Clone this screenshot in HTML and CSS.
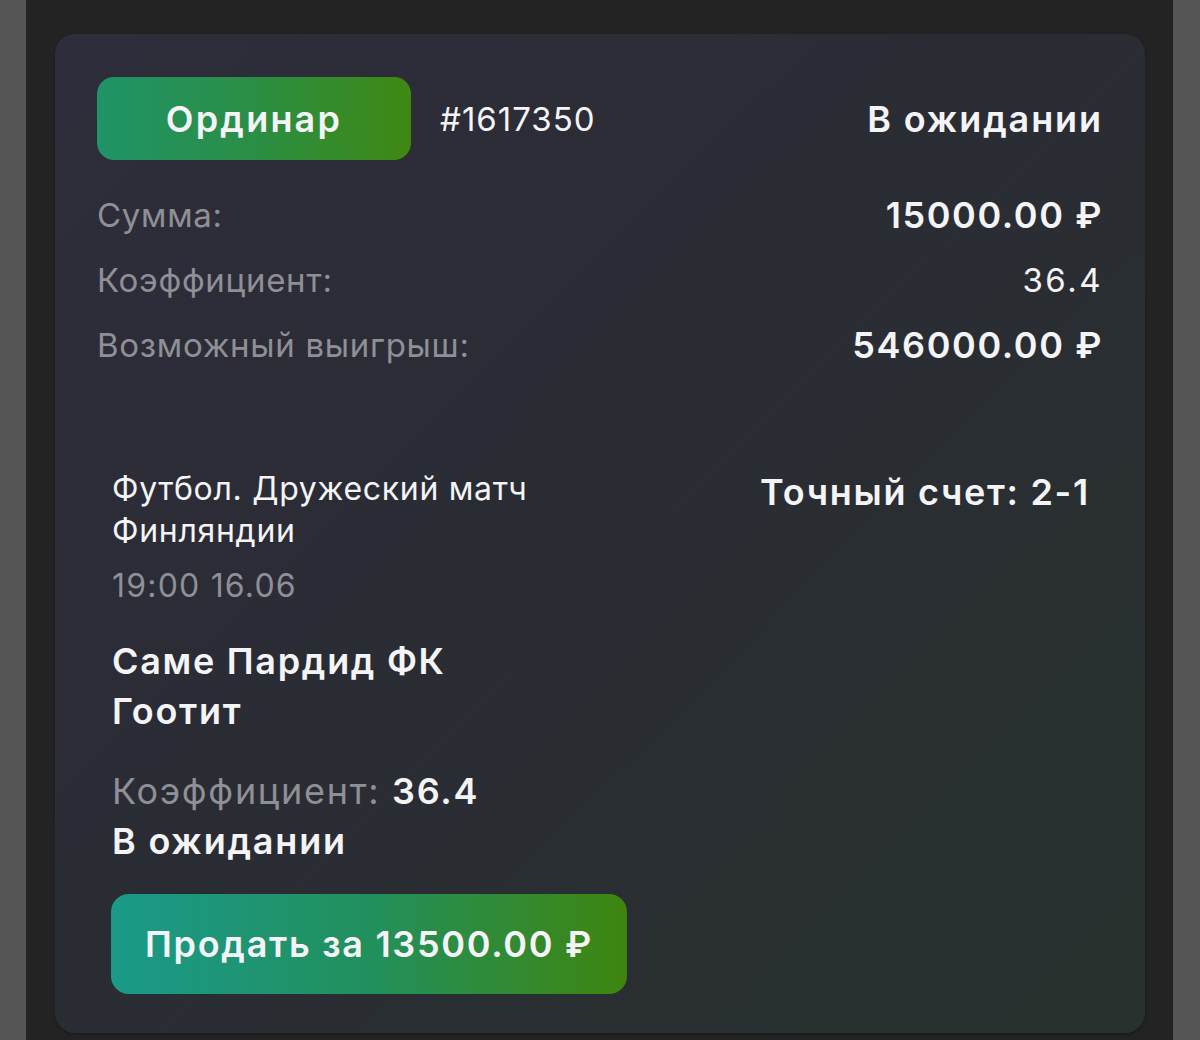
FILE: index.html
```html
<!DOCTYPE html>
<html lang="ru">

<head>
    <meta charset="UTF-8">
    <meta name="viewport" content="width=device-width, initial-scale=1.0">
    <link rel="stylesheet" href="styles.css">
</head>

<body>
    <div class="screen">
        <div class="bet-card">
            <div class="bet-header">
                <div class="bet-type">Ординар</div>
                <div class="bet-id">#1617350</div>
                <div class="bet-status">В ожидании</div>
            </div>

            <div class="bet-rows">
                <div class="bet-row">
                    <span class="label">Сумма:</span>
                    <span class="value strong">15000.00 ₽</span>
                </div>
                <div class="bet-row">
                    <span class="label">Коэффициент:</span>
                    <span class="value">36.4</span>
                </div>
                <div class="bet-row">
                    <span class="label">Возможный выигрыш:</span>
                    <span class="value strong">546000.00 ₽</span>
                </div>
            </div>

            <div class="event">
                <div class="event-main">
                    <div class="event-league">Футбол. Дружеский матч Финляндии</div>
                    <div class="event-date">19:00 16.06</div>
                    <div class="event-teams">Саме Пардид ФК Гоотит</div>
                    <div class="event-coef"><span class="label">Коэффициент:</span> <b>36.4</b></div>
                    <div class="event-status">В ожидании</div>
                </div>
                <div class="event-outcome">Точный счет: 2-1</div>
            </div>

            <button type="button" class="btn-sell">Продать за 13500.00 ₽</button>
        </div>
    </div>
</body>

</html>
```

FILE: styles.css
```css
/* page frame */
body {
    margin: 0;
    background: #565656;
    font-family: Inter, "Noto Sans", sans-serif;
    color: #f4f4f6;
}

.screen {
    margin: 0 27px 0 26px;
    height: 1040px;
    background: #232323;
    padding: 34px 28px 0 29px;
    box-sizing: border-box;
}

.bet-card {
    height: 999px;
    box-sizing: border-box;
    padding: 43px 44px 38px 42px;
    border-radius: 20px;
    background: linear-gradient(135deg, #2e2d3b 0%, #2a2c34 45%, #292f31 75%, #28312e 100%);
    box-shadow: 0 1px 3px rgba(0, 0, 0, 0.4);
}

/* header */
.bet-header {
    display: flex;
    align-items: center;
    height: 83px;
}

.bet-type {
    width: 314px;
    height: 83px;
    border-radius: 17px;
    background: linear-gradient(90deg, #1f9467 0%, #2b8e45 50%, #3f8812 100%);
    display: flex;
    align-items: center;
    justify-content: center;
    font-size: 36px;
    font-weight: 600;
    letter-spacing: 2.2px;
}

.bet-id {
    margin-left: 29px;
    font-size: 33px;
    letter-spacing: 1px;
}

.bet-status {
    margin-left: auto;
    margin-right: -2px;
    font-size: 36px;
    font-weight: 600;
    letter-spacing: 1.9px;
}

/* summary rows */
.bet-rows {
    margin-top: 22px;
}

.bet-row {
    display: flex;
    justify-content: space-between;
    align-items: center;
    height: 65px;
    font-size: 33px;
    letter-spacing: 0.7px;
}

.label {
    color: #8f8f96;
}

.value {
    margin-right: -2px;
    letter-spacing: 2.5px;
}

.value.strong {
    margin-right: -2px;
    font-size: 36px;
    font-weight: 600;
    letter-spacing: 1.6px;
}

/* event */
.event {
    display: flex;
    justify-content: space-between;
    margin-top: 91px;
    padding: 0 13px 0 15px;
}

.event-main {
    max-width: 450px;
}

.event-league {
    font-size: 32px;
    line-height: 42px;
    letter-spacing: 0.7px;
}

.event-date {
    margin-top: 13px;
    font-size: 32px;
    line-height: 42px;
    letter-spacing: 1.2px;
    color: #8f8f96;
}

.event-teams {
    margin-top: 29px;
    font-size: 36px;
    font-weight: 600;
    line-height: 50px;
    letter-spacing: 1.7px;
}

.event-coef {
    margin-top: 30px;
    font-size: 36px;
    line-height: 50px;
    letter-spacing: 1.7px;
}

.event-coef b {
    font-weight: 600;
    letter-spacing: 1.7px;
}

.event-status {
    font-size: 36px;
    font-weight: 600;
    line-height: 50px;
    letter-spacing: 1.8px;
}

.event-outcome {
    margin-right: -2px;
    padding-top: 3px;
    font-size: 36px;
    font-weight: 600;
    line-height: 42px;
    letter-spacing: 1.7px;
}

.btn-sell {
    display: block;
    margin: 28px 0 0 14px;
    width: 516px;
    height: 100px;
    border: none;
    border-radius: 18px;
    background: linear-gradient(90deg, #1a9a8a 0%, #22905d 50%, #3e850f 100%);
    color: #f4f4f6;
    font-family: inherit;
    font-size: 36px;
    font-weight: 600;
    letter-spacing: 1.7px;
}
```
